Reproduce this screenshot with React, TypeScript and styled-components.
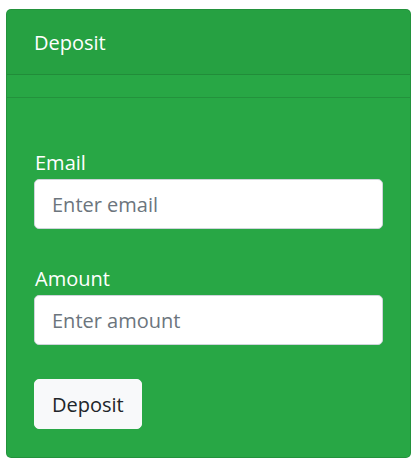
import React from "react";
import styled, { createGlobalStyle } from "styled-components";

const Global = createGlobalStyle`
  html, body { margin: 0; padding: 0; background: #ffffff; }
  body { font-family: "Open Sans", "Noto Sans", Arial, sans-serif; }
  * { box-sizing: border-box; }
`;

const Card = styled.div`
  margin: 9px 6px 0 6px;
  width: 405px;
  background: #28a745;
  border: 1px solid rgba(0, 0, 0, 0.125);
  border-radius: 5px;
  color: #ffffff;
  display: flex;
  flex-direction: column;
  overflow: hidden;
`;

const Header = styled.div`
  padding: 18px 27px 16px 27px;
  background: rgba(0, 0, 0, 0.03);
  border-bottom: 1px solid rgba(0, 0, 0, 0.125);
  font-size: 20px;
  line-height: 30px;
`;

const Spacer = styled.div`
  height: 23px;
  border-bottom: 1px solid rgba(0, 0, 0, 0.125);
`;

const Body = styled.form`
  padding: 50px 27px 28px 27px;
  display: flex;
  flex-direction: column;
  align-items: flex-start;
`;

const Group = styled.div<{ $gap: number }>`
  width: 100%;
  display: flex;
  flex-direction: column;
  margin-bottom: ${(p) => p.$gap}px;
`;

const Label = styled.label`
  font-size: 20px;
  line-height: 30px;
  margin-bottom: 1px;
  padding-left: 1px;
`;

const Input = styled.input`
  width: 349px;
  height: 50px;
  padding: 0 17px;
  font-family: inherit;
  font-size: 20px;
  color: #495057;
  background: #ffffff;
  border: 1px solid #ced4da;
  border-radius: 5px;
  outline: none;
  &::placeholder { color: #6c757d; opacity: 1; }
`;

const Button = styled.button`
  height: 50px;
  padding: 0 17px;
  font-family: inherit;
  font-size: 20px;
  color: #212529;
  background: #f8f9fa;
  border: 1px solid #f8f9fa;
  border-radius: 5px;
  cursor: pointer;
`;

export default function App() {
  return (
    <>
      <Global />
      <Card>
        <Header>Deposit</Header>
        <Spacer />
        <Body onSubmit={(e) => e.preventDefault()}>
          <Group $gap={35}>
            <Label>Email</Label>
            <Input type="email" placeholder="Enter email" />
          </Group>
          <Group $gap={34}>
            <Label>Amount</Label>
            <Input type="text" placeholder="Enter amount" />
          </Group>
          <Button type="submit">Deposit</Button>
        </Body>
      </Card>
    </>
  );
}
